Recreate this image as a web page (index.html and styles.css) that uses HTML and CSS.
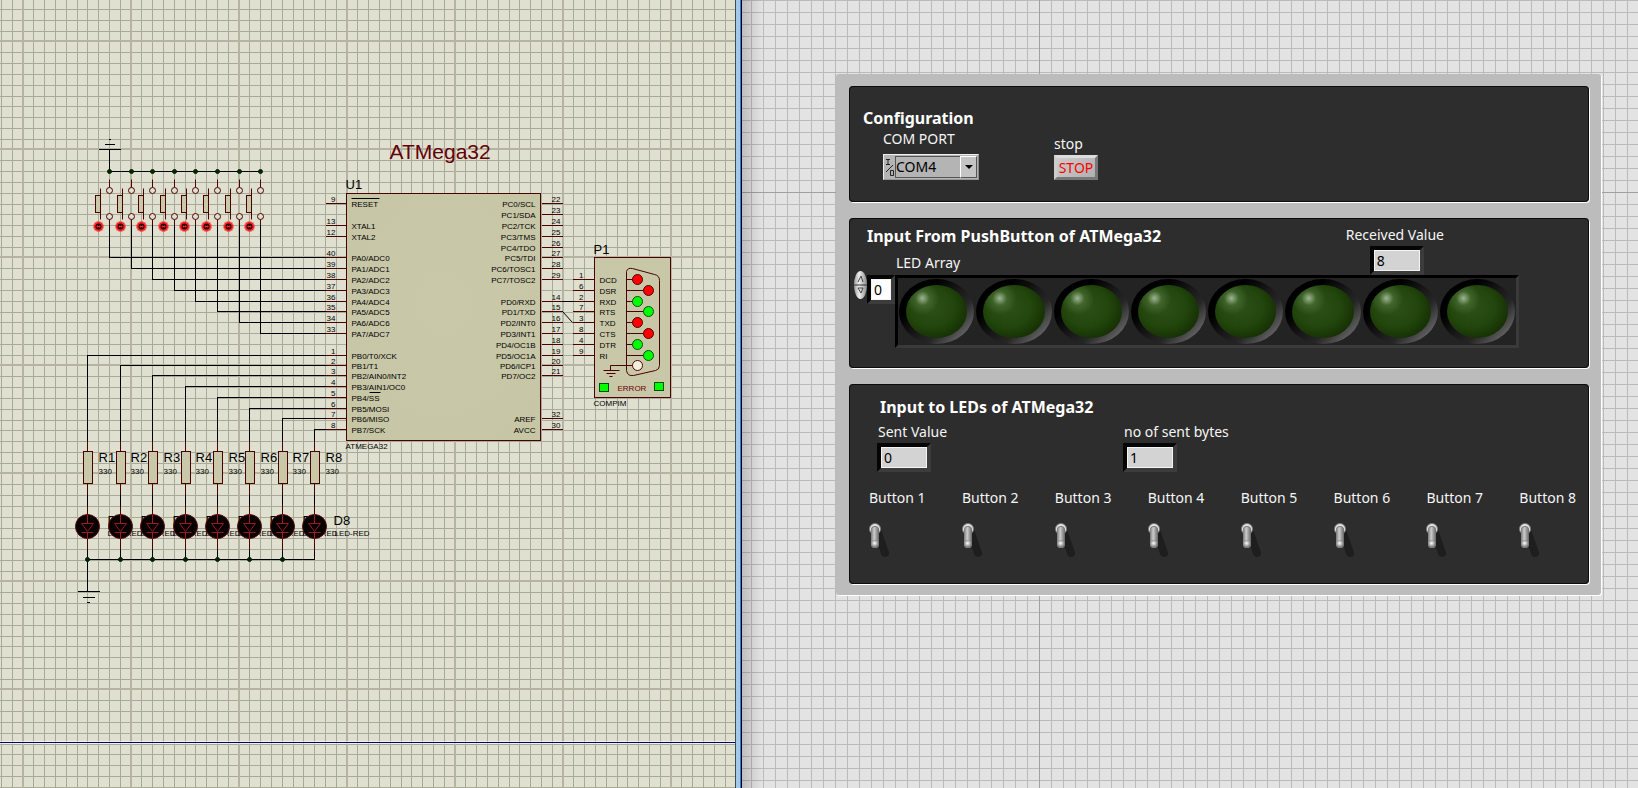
FILE: index.html
```html
<!DOCTYPE html>
<html lang="en">
<head>
<meta charset="utf-8">
<title>ATMega32 serial interface</title>
<link rel="stylesheet" href="styles.css">
</head>
<body>
<main class="workspace">
  <section class="schematic" aria-label="Schematic">
    <svg class="sheet" role="img" aria-label="ATMega32 circuit">
      <defs>
        <pattern id="grid" x="22" y="40" width="108" height="108" patternUnits="userSpaceOnUse">
          <rect width="108" height="108" fill="#e0e0d0"/>
          <path fill="#a9a998" d="M11 0h1v108h-1zM22 0h1v108h-1zM33 0h1v108h-1zM44 0h1v108h-1zM55 0h1v108h-1zM65 0h1v108h-1zM76 0h1v108h-1zM87 0h1v108h-1zM98 0h1v108h-1z"/>
          <path fill="#a9a998" d="M0 12h108v1h-108zM0 23h108v1h-108zM0 34h108v1h-108zM0 45h108v1h-108zM0 56h108v1h-108zM0 66h108v1h-108zM0 77h108v1h-108zM0 88h108v1h-108zM0 99h108v1h-108z"/>
          <path fill="#b4b4a0" d="M0 0h2v108h-2zM0 0h108v2h-108z"/>
        </pattern>
        <radialGradient id="chipShade" cx="50%" cy="45%" r="75%">
          <stop offset="0" stop-color="#c9c8a9"/><stop offset="1" stop-color="#c6c5a4"/>
        </radialGradient>
        <g id="push">
          <path class="pin" d="M0 8V16M0 48V54"/>
          <circle class="open" cy="19" r="3"/><circle class="open" cy="45" r="3"/>
          <path class="pin" d="M-9 17V48"/>
          <rect class="part" x="-14" y="24" width="5" height="17"/>
          <path fill="#f22" d="M-13 50h4v1h2v2h1v4h-1v2h-2v1h-4v-1h-2v-2h-1v-4h1v-2h2z"/>
          <circle cx="-11" cy="55" r="3" fill="#200"/>
          <path stroke="#f22" d="M-13 55h4M-12 54v2M-10 54v2" fill="none"/>
          <circle class="node" r="2"/>
        </g>
        <g id="res">
          <path class="pin" d="M0 440V451M0 483V493M0 504V514M0 538V549"/>
          <path class="wire" d="M0 493V505M0 549V559"/>
          <rect class="part" x="-4" y="451" width="9" height="32"/>
        </g>
        <g id="led">
          <circle cy="526" r="12" fill="#050000" stroke="#5a0808"/>
          <path d="M0 514V523M0 532V538M-6 523H6L0 531ZM-6 532H6" fill="none" stroke="#a01820"/>
        </g>
      </defs>
      <rect width="100%" height="100%" fill="url(#grid)"/>
      <rect y="741" width="100%" height="3" fill="#fff" fill-opacity=".5"/>
      <rect y="742" width="100%" height="1" fill="#000070"/>

      <g transform="translate(.5 .5)">
        <g class="crisp">
          <path class="wire" d="M98 149h22M104 144h10M108 139h2M109 149V171H260"/>
          <path class="wire" d="M109 220V257H326M131 220V268H326M152 220V279H326M174 220V290H326M195 220V301H326M217 220V311H326M239 220V322H326M260 220V333H326"/>
          <path class="wire" d="M87 440V355H326M120 440V365H326M152 440V375H326M185 440V386H326M217 440V397H326M249 440V408H326M282 440V418H326M314 440V429H326"/>
          <path class="wire" d="M87 559H314M87 559V591M77 591h22M82 597h12M86 602h3"/>
          <path class="pin" d="M325 203h21M325 225h21M325 236h21M325 257h21M325 268h21M325 279h21M325 290h21M325 301h21M325 311h21M325 322h21M325 333h21M325 355h21M325 365h21M325 375h21M325 386h21M325 397h21M325 408h21M325 418h21M325 429h21"/>
          <path class="pin" d="M541 203h21M541 214h21M541 225h21M541 236h21M541 247h21M541 257h21M541 268h21M541 279h21M541 301h21M541 311h21M541 322h21M541 333h21M541 344h21M541 355h21M541 365h21M541 375h21M541 418h21M541 429h21"/>
          <path class="pin" d="M572 279h22M572 290h22M572 301h22M572 311h22M572 322h22M572 333h22M572 344h22M572 355h22"/>
          <path class="wire" d="M562 301h10"/>
        </g>
        <path class="wire" d="M562 311L572 322"/>
        <rect x="346" y="193" width="194" height="247" fill="url(#chipShade)" stroke="#4a0000"/>
        <rect x="594" y="257" width="76" height="140" fill="#c8c7a7" stroke="#4a0000"/>

        <use href="#push" x="109" y="171"/><use href="#push" x="131" y="171"/><use href="#push" x="152" y="171"/><use href="#push" x="174" y="171"/>
        <use href="#push" x="195" y="171"/><use href="#push" x="217" y="171"/><use href="#push" x="239" y="171"/><use href="#push" x="260" y="171"/>

        <g class="text-l">
          <text x="107" y="525">D1</text><text x="140" y="525">D2</text><text x="172" y="525">D3</text><text x="205" y="525">D4</text><text x="237" y="525">D5</text><text x="269" y="525">D6</text><text x="302" y="525">D7</text><text x="333" y="525">D8</text>
          <text x="98" y="462">R1</text><text x="130" y="462">R2</text><text x="163" y="462">R3</text><text x="195" y="462">R4</text><text x="228" y="462">R5</text><text x="260" y="462">R6</text><text x="292" y="462">R7</text><text x="325" y="462">R8</text>
          <text x="345" y="189">U1</text><text x="593" y="254">P1</text>
        </g>
        <g class="text-s">
          <text x="107" y="536">LED-RED</text><text x="140" y="536">LED-RED</text><text x="172" y="536">LED-RED</text><text x="205" y="536">LED-RED</text><text x="237" y="536">LED-RED</text><text x="269" y="536">LED-RED</text><text x="302" y="536">LED-RED</text><text x="334" y="536">LED-RED</text>
          <text x="98" y="474">330</text><text x="130" y="474">330</text><text x="163" y="474">330</text><text x="195" y="474">330</text><text x="228" y="474">330</text><text x="260" y="474">330</text><text x="292" y="474">330</text><text x="325" y="474">330</text>
          <text x="345" y="449">ATMEGA32</text><text x="593" y="406">COMPIM</text>
        </g>
        <g class="crisp">
          <use href="#res" x="87"/><use href="#res" x="120"/><use href="#res" x="152"/><use href="#res" x="185"/><use href="#res" x="217"/><use href="#res" x="249"/><use href="#res" x="282"/><use href="#res" x="314"/>
        </g>
        <use href="#led" x="87"/><use href="#led" x="120"/><use href="#led" x="152"/><use href="#led" x="185"/><use href="#led" x="217"/><use href="#led" x="249"/><use href="#led" x="282"/><use href="#led" x="314"/>
        <g class="node">
          <circle cx="87" cy="559" r="2"/><circle cx="120" cy="559" r="2"/><circle cx="152" cy="559" r="2"/><circle cx="185" cy="559" r="2"/><circle cx="217" cy="559" r="2"/><circle cx="249" cy="559" r="2"/><circle cx="282" cy="559" r="2"/>
        </g>

        <text class="chip-title" x="389" y="159">ATMega32</text>
        <path class="wire" d="M351 198h28M369 392h11"/>
        <g class="text-s">
          <text x="351" y="207">RESET</text><text x="351" y="229">XTAL1</text><text x="351" y="240">XTAL2</text>
          <text x="351" y="261">PA0/ADC0</text><text x="351" y="272">PA1/ADC1</text><text x="351" y="283">PA2/ADC2</text><text x="351" y="294">PA3/ADC3</text><text x="351" y="305">PA4/ADC4</text><text x="351" y="315">PA5/ADC5</text><text x="351" y="326">PA6/ADC6</text><text x="351" y="337">PA7/ADC7</text>
          <text x="351" y="359">PB0/T0/XCK</text><text x="351" y="369">PB1/T1</text><text x="351" y="379">PB2/AIN0/INT2</text><text x="351" y="390">PB3/AIN1/OC0</text><text x="351" y="401">PB4/SS</text><text x="351" y="412">PB5/MOSI</text><text x="351" y="422">PB6/MISO</text><text x="351" y="433">PB7/SCK</text>
          <text x="599" y="283">DCD</text><text x="599" y="294">DSR</text><text x="599" y="305">RXD</text><text x="599" y="315">RTS</text><text x="599" y="326">TXD</text><text x="599" y="337">CTS</text><text x="599" y="348">DTR</text><text x="599" y="359">RI</text>
        </g>
        <g class="text-s end">
          <text x="535" y="207">PC0/SCL</text><text x="535" y="218">PC1/SDA</text><text x="535" y="229">PC2/TCK</text><text x="535" y="240">PC3/TMS</text><text x="535" y="251">PC4/TDO</text><text x="535" y="261">PC5/TDI</text><text x="535" y="272">PC6/TOSC1</text><text x="535" y="283">PC7/TOSC2</text>
          <text x="535" y="305">PD0/RXD</text><text x="535" y="315">PD1/TXD</text><text x="535" y="326">PD2/INT0</text><text x="535" y="337">PD3/INT1</text><text x="535" y="348">PD4/OC1B</text><text x="535" y="359">PD5/OC1A</text><text x="535" y="369">PD6/ICP1</text><text x="535" y="379">PD7/OC2</text><text x="535" y="422">AREF</text><text x="535" y="433">AVCC</text>
          <text x="335" y="202">9</text><text x="335" y="224">13</text><text x="335" y="235">12</text>
          <text x="335" y="256">40</text><text x="335" y="267">39</text><text x="335" y="278">38</text><text x="335" y="289">37</text><text x="335" y="300">36</text><text x="335" y="310">35</text><text x="335" y="321">34</text><text x="335" y="332">33</text>
          <text x="335" y="354">1</text><text x="335" y="364">2</text><text x="335" y="374">3</text><text x="335" y="385">4</text><text x="335" y="396">5</text><text x="335" y="407">6</text><text x="335" y="417">7</text><text x="335" y="428">8</text>
          <text x="560" y="202">22</text><text x="560" y="213">23</text><text x="560" y="224">24</text><text x="560" y="235">25</text><text x="560" y="246">26</text><text x="560" y="256">27</text><text x="560" y="267">28</text><text x="560" y="278">29</text><text x="560" y="300">14</text><text x="560" y="310">15</text><text x="560" y="321">16</text><text x="560" y="332">17</text><text x="560" y="343">18</text><text x="560" y="354">19</text><text x="560" y="364">20</text><text x="560" y="374">21</text><text x="560" y="417">32</text><text x="560" y="428">30</text>
          <text x="583" y="278">1</text><text x="583" y="289">6</text><text x="583" y="300">2</text><text x="583" y="310">7</text><text x="583" y="321">3</text><text x="583" y="332">8</text><text x="583" y="343">4</text><text x="583" y="354">9</text>
        </g>

        <path class="pin" d="M626 271Q627 267 632 268L654 274Q659 275 659 280V365Q659 369 655 370L633 375Q627 376 626 370Z"/>
        <path class="pin" d="M626 279h6M626 290h17M626 301h6M626 311h17M626 322h6M626 333h17M626 344h6M626 355h17M632 365H610V370M603 370h16M606 373h9M609 376h3"/>
        <g stroke="#500" fill="#f00"><circle cx="637" cy="279" r="5"/><circle cx="648" cy="290" r="5"/><circle cx="637" cy="322" r="5"/><circle cx="648" cy="333" r="5"/></g>
        <g stroke="#065006" fill="#0f0"><circle cx="637" cy="301" r="5"/><circle cx="648" cy="311" r="5"/><circle cx="637" cy="344" r="5"/><circle cx="648" cy="355" r="5"/><rect x="599" y="383" width="9" height="8"/><rect x="654" y="382" width="9" height="8"/></g>
        <circle cx="637" cy="365" r="5" fill="#f4f0e0" stroke="#500"/>
        <text class="text-s error" x="617" y="391">ERROR</text>
      </g>
    </svg>
  </section>

  <div class="divider"></div>

  <section class="front" aria-label="Front panel">
    <form class="frame">
      <fieldset class="panel config">
        <h2 class="title">Configuration</h2>
        <div class="config-row">
          <div class="field">
            <label class="caption" for="port">COM PORT</label>
            <div class="combo">
              <svg class="io" width="10" height="19" viewBox="0 0 10 19" aria-hidden="true"><path d="M1 1.500h4M3 2v4M1 6.500h4M1 14L8 7M5.500 12.500h3v5h-3z" fill="none" stroke="#222"/></svg>
              <select id="port" class="select"><option>COM4</option></select>
              <span class="arrow" aria-hidden="true"></span>
            </div>
          </div>
          <div class="field stop-field">
            <label class="caption" for="stop">stop</label>
            <button id="stop" class="stop" type="button">STOP</button>
          </div>
        </div>
      </fieldset>

      <fieldset class="panel received">
        <div class="received-head">
          <div>
            <h2 class="title">Input From PushButton of ATMega32</h2>
            <label class="caption array-caption" for="index">LED Array</label>
          </div>
          <div class="field received-field">
            <label class="caption" for="received">Received Value</label>
            <input id="received" class="number" value="8" readonly>
          </div>
        </div>
        <div class="array-row">
          <svg class="spinner" width="13" height="28" viewBox="0 0 13 28" aria-hidden="true">
            <defs><linearGradient id="metal"><stop offset="0" stop-color="#999"/><stop offset=".4" stop-color="#eee"/><stop offset="1" stop-color="#888"/></linearGradient></defs>
            <ellipse cx="6.500" cy="14" rx="6.500" ry="14" fill="url(#metal)"/>
            <path d="M0 14h13" stroke="#333"/><path d="M4 11l3-6 2 6M4 17h5l-2 5z" fill="none" stroke="#444"/>
          </svg>
          <input id="index" class="number index" value="0">
          <div class="array">
            <span class="lamp"></span><span class="lamp"></span><span class="lamp"></span><span class="lamp"></span><span class="lamp"></span><span class="lamp"></span><span class="lamp"></span><span class="lamp"></span>
          </div>
        </div>
      </fieldset>

      <fieldset class="panel sent">
        <h2 class="title">Input to LEDs of ATMega32</h2>
        <div class="sent-row">
          <div class="field"><label class="caption" for="sent">Sent Value</label><input id="sent" class="number" value="0" readonly></div>
          <div class="field"><label class="caption" for="bytes">no of sent bytes</label><input id="bytes" class="number" value="1" readonly></div>
        </div>
        <svg class="defs" width="0" height="0" aria-hidden="true">
          <defs>
            <linearGradient id="rod"><stop offset="0" stop-color="#777"/><stop offset=".4" stop-color="#ccc"/><stop offset="1" stop-color="#666"/></linearGradient>
            <radialGradient id="tip" cx="45%" cy="40%"><stop offset="0" stop-color="#fff"/><stop offset="1" stop-color="#777"/></radialGradient>
            <g id="toggle">
              <path d="M9 10L16 30" stroke="#1e1e1e" stroke-width="8" stroke-linecap="round"/>
              <circle cx="6" cy="6" r="5.500" fill="#e4e4e4" stroke="#777"/>
              <path d="M2 7a4 4 0 0 1 8 0z" fill="#777"/>
              <rect x="2" y="4" width="8" height="21" rx="4" fill="url(#rod)"/>
              <ellipse cx="6" cy="21" rx="4" ry="4" fill="url(#tip)"/>
            </g>
          </defs>
        </svg>
        <div class="switches">
          <label class="switch">Button 1<span class="lever"><svg width="22" height="36"><use href="#toggle"/></svg><input type="checkbox"></span></label>
          <label class="switch">Button 2<span class="lever"><svg width="22" height="36"><use href="#toggle"/></svg><input type="checkbox"></span></label>
          <label class="switch">Button 3<span class="lever"><svg width="22" height="36"><use href="#toggle"/></svg><input type="checkbox"></span></label>
          <label class="switch">Button 4<span class="lever"><svg width="22" height="36"><use href="#toggle"/></svg><input type="checkbox"></span></label>
          <label class="switch">Button 5<span class="lever"><svg width="22" height="36"><use href="#toggle"/></svg><input type="checkbox"></span></label>
          <label class="switch">Button 6<span class="lever"><svg width="22" height="36"><use href="#toggle"/></svg><input type="checkbox"></span></label>
          <label class="switch">Button 7<span class="lever"><svg width="22" height="36"><use href="#toggle"/></svg><input type="checkbox"></span></label>
          <label class="switch">Button 8<span class="lever"><svg width="22" height="36"><use href="#toggle"/></svg><input type="checkbox"></span></label>
        </div>
      </fieldset>
    </form>
  </section>
</main>
</body>
</html>
```

FILE: styles.css
```css
* { box-sizing: border-box; }
body { margin: 0; font: 14px/20px "Noto Sans", "Open Sans", sans-serif; }

.workspace {
  display: grid;
  grid-template-columns: 735fr 7px 896fr;
  min-height: 100vh;
}

/* Schematic sheet */
.schematic { display: flex; overflow: hidden; background: #e0e0d0; }
.sheet { width: 100%; height: auto; min-height: 100%; font-family: "Liberation Sans", sans-serif; }
.sheet text { transform: translateY(-1px); }
.crisp { shape-rendering: crispEdges; }
.wire { fill: none; stroke: #000; }
.pin { fill: none; stroke: #4a0000; }
.open { fill: #e0e0d0; stroke: #4a0000; }
.part { fill: #c9c8a9; stroke: #4a0000; }
.node { fill: #002800; stroke: #002000; }
.text-s { font-size: 8px; }
.text-l { font-size: 13px; }
.end { text-anchor: end; }
.chip-title { font-size: 21px; fill: #660008; }
.error { fill: #700000; }

.divider {
  background: linear-gradient(90deg, #3c4c50 1px, #a4c8e8 1px, #a4c8e8 5px, #1883e8 5px, #1883e8 6px, #000 6px);
}

/* Instrument panel */
.front {
  padding: 74px 37px 40px 94px;
  background:
    linear-gradient(90deg, rgba(0, 0, 0, .16), transparent 20px),
    linear-gradient(#a0a0a0, #a0a0a0) 297px 0 / 1px 100% no-repeat,
    linear-gradient(#a0a0a0, #a0a0a0) 0 192px / 100% 1px no-repeat,
    linear-gradient(90deg, #bababa 1px, transparent 1px) 9px 0 / 12px 12px,
    linear-gradient(#bababa 1px, transparent 1px) 0 0 / 12px 12px,
    #e3e3e3;
}
.frame {
  display: flex;
  flex-direction: column;
  gap: 16px;
  padding: 12px 12px 11px 13px;
  border-radius: 3px;
  background: #bcbcbc;
  box-shadow: 1px 1px 0 #fff;
}
.panel {
  margin: 0;
  min-width: 0;
  border: 1px solid #0c0c0c;
  border-radius: 4px;
  background: #2d2d2d;
  box-shadow: 1px 1px 0 #fff;
  color: #f5f5f5;
}
.title { margin: 0; font-size: 16px; line-height: 22px; font-weight: 700; color: #fff; }
.caption { display: block; white-space: nowrap; }
.field { display: flex; flex-direction: column; align-items: flex-start; }

.config { padding: 20px 13px 21px; }
.config-row { display: flex; align-items: flex-end; gap: 75px; padding-left: 20px; }
.config-row .field { gap: 5px; }
.config-row .stop-field { gap: 1px; }
.combo {
  position: relative;
  display: flex;
  width: 96px;
  height: 26px;
  padding: 1px 1px 1px 0;
  border: 1px solid #eee;
  border-right-color: #888;
  border-bottom-color: #999;
  background: #b4b4b4;
}
.io { flex: none; margin: 2px 0 0 1px; }
.select {
  appearance: none;
  flex: 1;
  min-width: 0;
  height: 22px;
  padding: 0 17px 0 0;
  border: 1px solid #555;
  border-radius: 0;
  background: #b4b4b4;
  color: #000;
  font: inherit;
}
.arrow {
  position: absolute;
  top: 1px;
  right: 1px;
  display: grid;
  place-items: center;
  width: 17px;
  height: 22px;
  border: 1px solid #fff;
  border-right-color: #555;
  border-bottom-color: #555;
  background: #c4c4c4;
  pointer-events: none;
}
.arrow::before { content: ""; border: 4px solid transparent; border-top-color: #000; border-bottom: 0; }
.stop {
  width: 44px;
  height: 25px;
  padding: 0;
  border: 3px solid;
  border-color: #ddd #777 #777 #ccc;
  background: linear-gradient(135deg, #ccc, #b0b0b0);
  color: #f00;
  font: inherit;
  line-height: 18px;
}

.number {
  width: 54px;
  height: 29px;
  padding: 0 3px;
  border: 4px solid;
  border-color: #050505 #3c3c3c #3c3c3c #050505;
  border-radius: 0;
  background: #d3d3d3;
  box-shadow: inset 0 0 0 1px #f4f4f4;
  color: #000;
  font: inherit;
}

.received { padding: 6px 69px 19px 4px; }
.received-head { display: flex; justify-content: space-between; align-items: flex-start; }
.received-head .title { padding-left: 13px; }
.array-caption { padding: 6px 0 0 42px; }
.received-field { gap: 1px; padding-right: 75px; }
.received-field .number { margin-left: 24px; }
.array-row { display: flex; align-items: flex-start; }
.spinner { flex: none; margin-top: -4px; }
.index { flex: none; width: 28px; background: #fff; }
.array {
  flex: 1;
  display: flex;
  padding: 1px 0;
  border: 3px solid;
  border-color: #000 #3a3a3a #3a3a3a #000;
  background: #232323;
}
.lamp {
  flex: 1;
  display: flex;
  height: 65px;
  padding: 6px 7px;
  margin: 0 1px;
  border-radius: 50%;
  background: linear-gradient(135deg, #000 0 28%, #181818 50%, #262626 66%, #666 88%);
}
.lamp::before {
  content: "";
  flex: 1;
  border-radius: 50%;
  background:
    radial-gradient(circle at 27% 25%, rgba(210, 225, 200, .7), rgba(120, 160, 100, .3) 12%, transparent 28%),
    radial-gradient(ellipse at 42% 42%, #2c5018, #22460c 45%, #163004 75%, #0b1c02);
}

.sent { padding: 11px 12px 24px 19px; }
.sent .title { padding-left: 11px; }
.sent-row { display: flex; gap: 177px; padding: 4px 0 0 9px; }
.sent-row .field { gap: 1px; }
.sent-row .number { margin-left: -1px; }
.defs { display: block; }
.switches { display: flex; justify-content: space-between; padding-top: 16px; }
.switch { display: flex; flex-direction: column; gap: 15px; white-space: nowrap; }
.lever { display: grid; width: 22px; }
.lever > * { grid-area: 1 / 1; margin: 0; }
.lever input { appearance: none; cursor: pointer; }
```
